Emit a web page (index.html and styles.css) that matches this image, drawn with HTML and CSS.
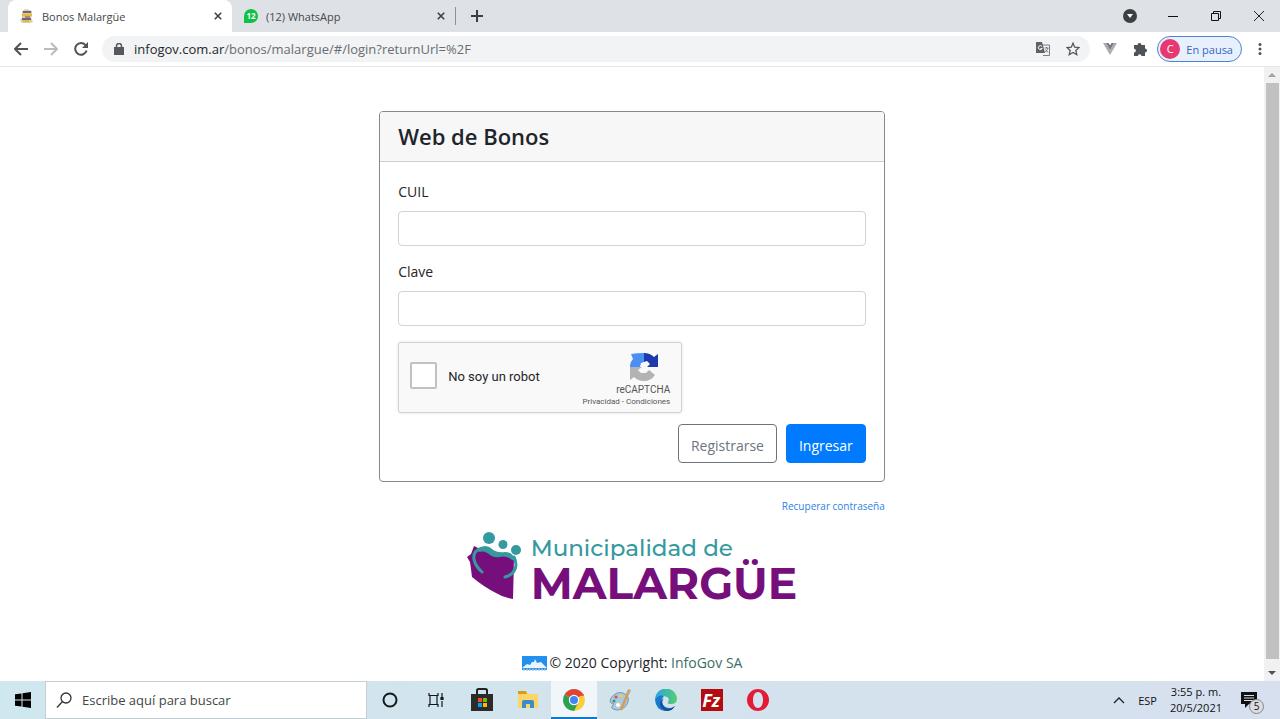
FILE: index.html
```
<!DOCTYPE html>
<html lang="es">
<head>
	<meta charset="utf-8">
	<title>Bonos Malargüe</title>
	<link rel="stylesheet" href="styles.css">
</head>
<body>
	<header class="browser">
		<div class="tabs">
			<div class="tab active">
				<svg class="favicon" viewBox="0 0 14 14"><path d="M2 2l4-2 6 2v5l-1 2 2 4-3 1H2l-2-3 2-2z" fill="#d8cda8"/><path d="M3 3h8M2 10h9" stroke="#6d6875" stroke-width="2"/><path d="M2 6h10M3 12h6" stroke="#e5b93c" stroke-width="2"/><path d="M5 8h5" stroke="#8d3c4a"/></svg>
				<span>Bonos Malargüe</span>
				<button class="close" aria-label="Cerrar pestaña"><svg viewBox="0 0 10 10"><path d="M1 1l8 8M9 1l-8 8"/></svg></button>
			</div>
			<div class="tab">
				<svg class="favicon" viewBox="0 0 14 14"><path d="M0 14V7a7 7 0 1 1 7 7z" fill="#0fc144"/><text x="7" y="10" text-anchor="middle" class="count">12</text></svg>
				<span>(12) WhatsApp</span>
				<button class="close" aria-label="Cerrar pestaña"><svg viewBox="0 0 10 10"><path d="M1 1l8 8M9 1l-8 8"/></svg></button>
			</div>
			<button class="newtab" aria-label="Nueva pestaña"><svg viewBox="0 0 12 12"><path d="M6 0v12M0 6h12"/></svg></button>
			<div class="windowbuttons">
				<button aria-label="Buscar pestañas"><svg width="14" height="14" viewBox="0 0 14 14"><circle cx="7" cy="7" r="7" fill="#3c4043"/><path d="M4 5h6l-3 4z" fill="#fff"/></svg></button>
				<button aria-label="Minimizar"><svg width="10" height="10" viewBox="0 0 10 10"><path d="M0 5.500h10" stroke="#111"/></svg></button>
				<button aria-label="Restaurar"><svg width="10" height="10" viewBox="0 0 10 10" fill="none" stroke="#111"><path d="M.5 2.500h7v7h-7zM2.500 2.500v-2h7v7h-2"/></svg></button>
				<button aria-label="Cerrar"><svg width="10" height="10" viewBox="0 0 10 10"><path d="M0 0l10 10M10 0L0 10" stroke="#222"/></svg></button>
			</div>
		</div>
		<div class="toolbar">
			<button aria-label="Atrás"><svg width="14" height="14" viewBox="0 0 14 14" fill="none" stroke="#505357" stroke-width="2"><path d="M14 7H2M7 1L1 7l6 6"/></svg></button>
			<button aria-label="Adelante"><svg width="14" height="14" viewBox="0 0 14 14" fill="none" stroke="#b9bbbe" stroke-width="2"><path d="M0 7h12M7 1l6 6-6 6"/></svg></button>
			<button aria-label="Recargar"><svg width="14" height="14" viewBox="0 0 14 14"><path d="M11.500 3.200A5.800 5.800 0 1 0 12.600 8.500" fill="none" stroke="#505357" stroke-width="2"/><path d="M14 0v6H8z" fill="#505357"/></svg></button>
			<div class="address">
				<svg width="10" height="12" viewBox="0 0 10 12"><path d="M0 4h10v8H0z" fill="#55585c"/><path d="M2.500 5V3a2.500 2.500 0 0 1 5 0v2" fill="none" stroke="#55585c" stroke-width="1.500"/></svg>
				<span class="url"><b>infogov.com.ar</b>/bonos/malargue/#/login?returnUrl=%2F</span>
				<svg width="14" height="14" viewBox="0 0 14 14"><path d="M5 3h8.500v10.500H7" fill="#f1f3f4" stroke="#7b7e82"/><path d="M0 0h6l3 11H0z" fill="#5f6368"/><path d="M6 4.500a2 2 0 1 0 .2 2H4.500" fill="none" stroke="#fff"/><path d="M8.500 6h4M10.500 5v1M12 6q-.8 3-3 4M9.500 7.500l2.500 3" fill="none" stroke="#5f6368" stroke-width=".8"/></svg>
				<svg width="14" height="14" viewBox="0 0 14 14"><path d="M7 1.200l1.700 4 4.300.400-3.200 2.900 1 4.200L7 10.500l-3.800 2.200 1-4.200L1 5.600l4.300-.4z" fill="none" stroke="#55585c" stroke-width="1.300"/></svg>
			</div>
			<svg width="14" height="12" viewBox="0 0 14 12"><path d="M0 0h3l4 7 4-7h3L7 12z" fill="#a9acb0"/><path d="M3 0h2.500L7 2.500 8.500 0H11L7 7z" fill="#75797d"/></svg>
			<svg width="14" height="14" viewBox="0 0 14 14"><path d="M1 3h3.500a2 2 0 0 1 4 0H12v3.500a2 2 0 0 1 0 4V14H8.500a1.800 1.800 0 0 0-3.600 0H1v-3.500a1.900 1.900 0 0 0 0-3.800z" fill="#505357"/></svg>
			<button class="profile"><span class="avatar">C</span>En pausa</button>
			<button aria-label="Menú"><svg width="4" height="12" viewBox="0 0 4 12" fill="#505357"><circle cx="2" cy="1.500" r="1.500"/><circle cx="2" cy="6" r="1.500"/><circle cx="2" cy="10.500" r="1.500"/></svg></button>
		</div>
	</header>

	<div class="viewport">
		<main class="page">
			<form class="card">
				<h1>Web de Bonos</h1>
				<div class="cardbody">
					<label for="cuil">CUIL</label>
					<input type="text" id="cuil" name="cuil">
					<label for="clave">Clave</label>
					<input type="password" id="clave" name="clave">
					<div class="captcha">
						<input type="checkbox" id="robot" name="robot">
						<label for="robot">No soy un robot</label>
						<div class="captchabrand">
							<svg width="30" height="30" viewBox="0 0 30 30"><path d="M15 1v9l-3 1-1 4H1q0-5 3-8L2 2q6-1 13-1z" fill="#4a90f4"/><path d="M15 1q6 0 10 4l4-3v13H18l3-3-3-3-3 1z" fill="#1c3aa9"/><path d="M1 15h12l-4 3 3 3h5l3-3 6 5q-4 6-11 6-6 0-10-4l-4 3z" fill="#b3b3b3"/></svg>
							<span class="brandname">reCAPTCHA</span>
							<span class="legal"><a href="#">Privacidad</a> - <a href="#">Condiciones</a></span>
						</div>
					</div>
					<div class="actions">
						<button type="button" class="btn">Registrarse</button>
						<button type="submit" class="btn primary">Ingresar</button>
					</div>
				</div>
			</form>
			<div class="recover"><a href="#">Recuperar contraseña</a></div>
			<div class="logo">
				<svg width="56" height="68" viewBox="0 0 56 68"><path d="M7 14l4 2 36 10-1 41q-9-1-17-6-12-6-24-16Q4 37 3 30l-3-5 4-3z" fill="#760e7c"/><path d="M13 17C4 20 5 31 15 40M47 25c4 8 2 17-9 20" fill="none" stroke="#3599a0" stroke-width="3" stroke-linecap="round"/><path d="M10 17q9-6 15 0 5 4 13 3 8 0 11 9l-4-1q-6-5-12-3-6 1-10-2-5-5-11-3z" fill="#3599a0"/><g fill="#3599a0"><circle cx="22" cy="6" r="6"/><circle cx="36" cy="12.500" r="4.500"/><circle cx="49" cy="18" r="5"/></g></svg>
				<div class="logotext">
					<span class="town">Municipalidad de</span>
					<span class="name">MALARGÜE</span>
				</div>
			</div>
			<footer>
				<svg width="25" height="15" viewBox="0 0 25 15"><path d="M0 0h25v14H0z" fill="#2290ee"/><path d="M0 12l5-4 3 1 2-3h2l1-3 2 4 4-1 6 6z" fill="#e8f5ff"/><path d="M1 13.500h23" stroke="#7fb7df" stroke-width="2" stroke-dasharray="2 1"/></svg>
				<span>© 2020 Copyright: <a href="#">InfoGov SA</a></span>
			</footer>
		</main>
		<div class="scrollbar">
			<svg viewBox="0 0 8 4"><path d="M0 4l4-4 4 4z" fill="#a3a3a3"/></svg>
			<div class="thumb"></div>
			<svg viewBox="0 0 8 4"><path d="M0 0l4 4 4-4z" fill="#505050"/></svg>
		</div>
	</div>

	<div class="taskbar">
		<button class="start" aria-label="Inicio"><svg width="16" height="16" viewBox="0 0 16 16"><path d="M0 2.300L6.500 1.400V7.500H0zM7.500 1.200L16 0v7.500H7.500zM0 8.500h6.500v6.100L0 13.700zM7.500 8.500H16V16l-8.500-1.200z"/></svg></button>
		<div class="search">
			<svg width="16" height="16" viewBox="0 0 16 16" fill="none" stroke="#333" stroke-width="1.300"><circle cx="10" cy="6" r="5"/><path d="M6.500 9.500L1 15.500"/></svg>
			<input type="text" aria-label="Buscar" placeholder="Escribe aquí para buscar">
		</div>
		<button class="app" aria-label="Cortana"><svg width="16" height="16" viewBox="0 0 16 16"><circle cx="8" cy="8" r="6.500" fill="none" stroke="#16191c" stroke-width="2"/></svg></button>
		<button class="app" aria-label="Vista de tareas"><svg width="16" height="16" viewBox="0 0 16 16" fill="none" stroke="#16191c" stroke-width="1.200"><path d="M1 1v2.500h9V1M1 15v-2.500h9V15M2 3.500v9M9 3.500v9M14 1v4M14 9v6"/><path d="M13 5.500h2v2h-2z" fill="#16191c"/></svg></button>
		<button class="app" aria-label="Microsoft Store"><svg width="22" height="24" viewBox="0 0 22 24"><path d="M6 8V2.500Q6 1 7.500 1h7Q16 1 16 2.500V8" fill="none" stroke="#222" stroke-width="2"/><path d="M0 6h22v17H0z" fill="#2b2b2b"/><path d="M7 10h4v4H7z" fill="#f25022"/><path d="M12 10h4v4h-4z" fill="#7fba00"/><path d="M7 15h4v4H7z" fill="#00a4ef"/><path d="M12 15h4v4h-4z" fill="#ffb900"/></svg></button>
		<button class="app" aria-label="Explorador"><svg width="20" height="18" viewBox="0 0 20 18"><path d="M0 0h8l2 3h10v14H0z" fill="#fbd566"/><path d="M0 0h8l1 3H0z" fill="#d99a21"/><path d="M4 17v-6q0-2 2-2h8q2 0 2 2v6h-4v-4H8v4z" fill="#3a8dcc"/></svg></button>
		<button class="app open" aria-label="Chrome"><svg width="22" height="22" viewBox="0 0 22 22"><path d="M11 11L1.500 5.500A11 11 0 0 1 20.500 5.500z" fill="#df4535"/><path d="M11 11h0L20.500 5.500A11 11 0 0 1 11 22z" fill="#fdce3c"/><path d="M1.500 5.500L11 11l4.300 2.500L11 22A11 11 0 0 1 1.500 5.500z" fill="#2da14d"/><path d="M11 6h9.800" stroke="#df4535" stroke-width="1.500"/><circle cx="11" cy="11" r="5.200" fill="#fff"/><circle cx="11" cy="11" r="4" fill="#4285f4"/></svg></button>
		<button class="app" aria-label="Paint"><svg width="24" height="22" viewBox="0 0 24 22"><path d="M3 9q5-7 12-5 7 3 5 9-3 8-11 8-8-1-4-5 2-2-2-2-2-1 0-5z" fill="#a9c9de" stroke="#7797ad"/><circle cx="8" cy="8" r="1.500" fill="#dd4f41"/><circle cx="13" cy="7" r="1.500" fill="#f3ce40"/><circle cx="6" cy="12" r="1.500" fill="#3c9b57"/><circle cx="10" cy="16" r="2" fill="#fff"/><path d="M20 4l-7 17" stroke="#d99b50" stroke-width="2.500"/><path d="M18 5l2-5 3 1-2 5z" fill="#c6a77e"/></svg></button>
		<button class="app" aria-label="Edge"><svg width="22" height="22" viewBox="0 0 22 22"><defs><linearGradient id="edge"><stop stop-color="#2ba4e4"/><stop offset="1" stop-color="#55ce70"/></linearGradient></defs><path d="M0 11A11 11 0 0 1 22 10q0 5-6 5-4 0-3-2 2-3-1-5Q5 5 0 11z" fill="url(#edge)"/><path d="M0 11q3-6 9-4-3 3-2 7 2 6 11 5-3 3-8 3Q1 21 0 11z" fill="#1979cf"/><path d="M9 9q-4 5 1 10 4 2 10-2-4 7-11 4-8-6 0-12z" fill="#124f9c"/></svg></button>
		<button class="app" aria-label="FileZilla"><svg width="22" height="22" viewBox="0 0 22 22"><path d="M0 0h22v22H0z" fill="#b30b10"/><text x="10" y="18" text-anchor="middle" class="fz">Fz</text></svg></button>
		<button class="app" aria-label="Opera"><svg width="22" height="22" viewBox="0 0 22 22"><path fill-rule="evenodd" d="M11 0a11 11 0 1 0 0 22 11 11 0 0 0 0-22zm0 3c3 0 5 3.500 5 8s-2 8-5 8-5-3.500-5-8 2-8 5-8z" fill="#e31b37"/></svg></button>
		<div class="tray">
			<svg width="12" height="8" viewBox="0 0 12 8"><path d="M1 7l5-5 5 5" fill="none" stroke="#222" stroke-width="1.300"/></svg>
			<span>ESP</span>
			<time>3:55 p. m.<br>20/5/2021</time>
			<div class="notices">
				<svg width="16" height="16" viewBox="0 0 16 16"><path d="M0 0h16v12h-8l-4 4v-4H0z" fill="#111"/><path d="M3 3.500h10M3 6h10M3 8.500h10" stroke="#d7e0ec"/></svg>
				<span class="badge">5</span>
			</div>
		</div>
	</div>
</body>
</html>
```

FILE: styles.css
```
* {
	box-sizing: border-box;
}

body {
	margin: 0;
	height: 100vh;
	display: flex;
	flex-direction: column;
	background-color: white;
	font-family: "Open Sans", "Noto Sans", sans-serif;
	font-size: 14px;
	color: #212529;
}

svg {
	display: block;
	flex: none;
}

button {
	font-family: inherit;
	border: none;
	background: none;
	padding: 0;
}

a {
	text-decoration: none;
}

/* browser window */
.tabs {
	display: flex;
	align-items: center;
	height: 32px;
	padding-left: 8px;
	background-color: #dee1e6;
	font-size: 11px;
	color: #45484c;
}

.tab {
	display: flex;
	align-items: center;
	gap: 8px;
	width: 224px;
	height: 32px;
	padding: 0 10px 0 12px;
	border-radius: 8px 8px 0 0;
}

.tab.active {
	background-color: white;
}

.tab + .tab {
	height: 18px;
	border-right: 1px solid #8d9196;
	border-radius: 0;
}

.favicon {
	width: 14px;
	height: 14px;
}

.count {
	font-size: 8px;
	font-weight: bold;
	fill: white;
}

.close {
	margin-left: auto;
}

.close svg {
	width: 8px;
	height: 8px;
	stroke: #3c4043;
	stroke-width: 2;
}

.newtab {
	margin-left: 15px;
}

.newtab svg {
	width: 12px;
	height: 12px;
	stroke: #3c4043;
	stroke-width: 2;
}

.windowbuttons {
	display: flex;
	align-items: center;
	margin-left: auto;
	height: 28px;
}

.windowbuttons button {
	display: flex;
	justify-content: center;
	width: 43px;
}

.toolbar {
	display: flex;
	align-items: center;
	gap: 16px;
	height: 35px;
	padding: 0 18px 0 14px;
	border-bottom: 1px solid #e6e7e9;
}

.address {
	display: flex;
	align-items: center;
	flex: 1;
	gap: 16px;
	height: 26px;
	margin: 0 -3px 0 -2px;
	padding: 0 10px 0 12px;
	border-radius: 13px;
	background-color: #f1f3f4;
}

.url {
	flex: 1;
	margin-left: -6px;
	font-size: 13px;
	color: #6a6d71;
}

.url b {
	font-weight: normal;
	color: #26282b;
}

.profile {
	display: flex;
	align-items: center;
	gap: 6px;
	height: 26px;
	margin-left: -6px;
	padding: 0 8px 0 2px;
	border: 1px solid #4c84cf;
	border-radius: 13px;
	background-color: #e8f0fe;
	font-size: 11px;
	color: #3566c0;
}

.avatar {
	width: 20px;
	height: 20px;
	border-radius: 50%;
	background-color: #e83870;
	line-height: 20px;
	text-align: center;
	color: white;
}

/* login page */
.viewport {
	display: flex;
	flex: 1;
	min-height: 0;
}

.page {
	display: flex;
	flex-direction: column;
	align-items: center;
	flex: 1;
	padding-top: 44px;
}

.card {
	width: 40%;
	border: 1px solid #85898d;
	border-radius: 4px;
}

.card h1 {
	margin: 0;
	padding: 10px 18px;
	border-bottom: 1px solid #ccced0;
	border-radius: 3px 3px 0 0;
	background-color: #f7f7f7;
	font-size: 22px;
	font-weight: 600;
	line-height: 29px;
}

.cardbody {
	display: flex;
	flex-direction: column;
	padding: 18px;
}

.cardbody > label {
	margin-bottom: 7px;
	line-height: 24px;
}

.cardbody > input {
	height: 35px;
	margin-bottom: 14px;
	padding: 6px 12px;
	border: 1px solid #ced4da;
	border-radius: 4px;
}

.captcha {
	display: flex;
	align-items: center;
	width: 284px;
	height: 71px;
	margin-top: 2px;
	padding: 0 11px;
	border: 1px solid #d3d3d3;
	border-radius: 3px;
	background-color: #f9f9f9;
	box-shadow: 0 0 3px #ddd;
	font-family: Roboto, sans-serif;
	font-size: 13px;
}

.captcha input {
	appearance: none;
	width: 27px;
	height: 27px;
	margin: 0 11px 4px 0;
	border: 2px solid #c1c1c1;
	border-radius: 2px;
	background-color: white;
}

.captcha label {
	padding-bottom: 2px;
}

.captchabrand {
	display: flex;
	flex-direction: column;
	align-items: flex-end;
	margin-left: auto;
	padding-top: 2px;
	color: #555;
}

.captchabrand svg {
	margin-right: 11px;
}

.brandname {
	font-size: 10px;
	line-height: 16px;
}

.legal {
	font-size: 8px;
	line-height: 8px;
}

.legal a {
	color: #555;
}

.actions {
	display: flex;
	justify-content: flex-end;
	gap: 9px;
	margin-top: 11px;
}

.btn {
	height: 39px;
	padding: 3px 12px 0;
	border: 1px solid #6c757d;
	border-radius: 4px;
	font-size: 14px;
	color: #6c757d;
}

.btn.primary {
	border-color: #007bff;
	background-color: #007bff;
	color: white;
}

.recover {
	width: 40%;
	margin-top: 16px;
	text-align: right;
	font-size: 10px;
	line-height: 16px;
}

.recover a {
	color: #2c83e3;
}

.logo {
	display: flex;
	gap: 8px;
	margin-top: 18px;
}

.logotext {
	display: flex;
	flex-direction: column;
	font-family: Montserrat, Inter, sans-serif;
}

.town {
	font-size: 23px;
	font-weight: 500;
	line-height: 32px;
	color: #3599a0;
}

.name {
	font-size: 44px;
	font-weight: 700;
	line-height: 38px;
	color: #760e7c;
}

footer {
	display: flex;
	align-items: center;
	gap: 3px;
	margin-top: auto;
	padding-bottom: 6px;
	line-height: 24px;
}

footer a {
	color: #3a6f64;
}

.scrollbar {
	display: flex;
	flex-direction: column;
	align-items: center;
	gap: 6px;
	width: 16px;
	padding: 6px 0;
	background-color: #f1f1f1;
}

.scrollbar svg {
	width: 8px;
	height: 4px;
}

.thumb {
	flex: 1;
	width: 13px;
	margin-bottom: 6px;
	background-color: #c1c1c1;
}

/* windows taskbar */
.taskbar {
	display: flex;
	align-items: stretch;
	height: 38px;
	background: linear-gradient(to right, #cfe7ef, #d3e3ec 50%, #d7e0ef);
}

.taskbar button {
	display: flex;
	align-items: center;
	justify-content: center;
	width: 46px;
}

.taskbar .start {
	width: 45px;
}

.search {
	display: flex;
	align-items: center;
	gap: 10px;
	width: 322px;
	padding-left: 10px;
	border: 1px solid #c4cfd4;
	background-color: white;
}

.search input {
	flex: 1;
	min-width: 0;
	padding: 0;
	border: none;
	font-family: inherit;
	font-size: 13px;
}

.search input::placeholder {
	color: #454545;
}

.taskbar .open {
	border-bottom: 2px solid #0f78c8;
	padding-top: 2px;
	background-color: #f0f6fa;
}

.fz {
	font-size: 18px;
	font-style: italic;
	font-weight: bold;
	fill: white;
}

.tray {
	display: flex;
	align-items: center;
	gap: 13px;
	margin-left: auto;
	padding-right: 23px;
	font-size: 11px;
	color: #111;
}

.tray time {
	line-height: 16px;
	text-align: center;
}

.notices {
	position: relative;
	margin-left: 6px;
}

.badge {
	position: absolute;
	top: 7px;
	left: 8px;
	width: 15px;
	height: 15px;
	border: 1px solid #888;
	border-radius: 50%;
	background-color: #d9dce0;
	font-size: 10px;
	line-height: 13px;
	text-align: center;
}
```
